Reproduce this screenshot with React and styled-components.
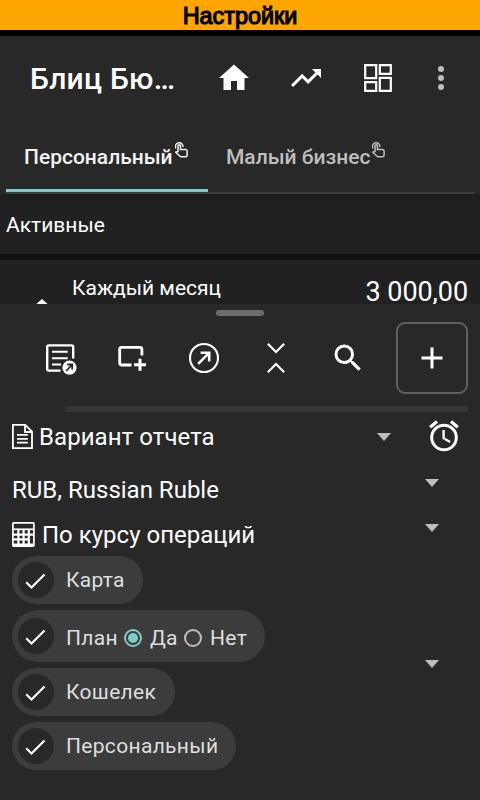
import React from "react";
import styled, { createGlobalStyle } from "styled-components";

const GlobalStyle = createGlobalStyle`
  * { box-sizing: border-box; }
  html, body { margin: 0; padding: 0; background: #282828; }
  body { font-family: Roboto, "Noto Sans", sans-serif; color: #fff; }
  svg { display: block; flex: none; }
`;

const Screen = styled.div`
  width: 480px;
  height: 800px;
  display: flex;
  flex-direction: column;
  overflow: hidden;
  background: #282828;
`;

const Banner = styled.div`
  flex: none;
  height: 36px;
  border-bottom: 6px solid #000;
  background: #ffa500;
  color: #000;
  text-align: center;
  font: 23.4px/32px "Liberation Sans", Arial, sans-serif;
  -webkit-text-stroke: 1.2px #000;
`;

const AppBar = styled.header`
  flex: none;
  height: 84px;
  padding: 0 21px 0 30px;
  display: flex;
  align-items: center;
`;

const Title = styled.h1`
  margin: 0;
  padding-top: 1px;
  width: 186px;
  font-size: 30px;
  line-height: 36px;
  font-weight: 500;
  letter-spacing: 0.28px;
  white-space: nowrap;
`;

const Actions = styled.div`
  display: flex;
  gap: 36px;
`;

const MoreButton = styled.div`
  margin-left: -9px;
  color: #bebebe;
`;

const Tabs = styled.nav`
  flex: none;
  height: 74px;
  margin: 0 6px;
  display: flex;
  border-bottom: 2px solid #3c3c3c;
`;

const Tab = styled.div`
  width: ${(p) => p.$width}px;
  height: 72px;
  padding: 21px 0 0 18px;
  display: flex;
  gap: 2px;
  border-bottom: 3px solid ${(p) => (p.$active ? "#80cbc4" : "transparent")};
  color: ${(p) => (p.$active ? "#f2f2f2" : "#bebebe")};
  font-size: 21px;
  line-height: 32px;
  font-weight: 500;
  white-space: nowrap;
`;

const SectionHeader = styled.div`
  flex: none;
  height: 66px;
  padding: 0 6px;
  border-bottom: 6px solid #111;
  background: linear-gradient(#1c1c1c, #212121 8px);
  font-size: 21px;
  line-height: 62px;
`;

const EntryRow = styled.div`
  flex: none;
  height: 44px;
  padding: 0 12px 0 33px;
  display: flex;
  overflow: hidden;
  background: #212121;
`;

const EntryIcon = styled.div`
  width: 39px;
  padding-top: 38px;
`;

const EntryTitle = styled.div`
  flex: 1;
  padding-top: 16px;
  font-size: 21px;
  line-height: 25px;
`;

const Amount = styled.div`
  padding-top: 18px;
  font-size: 27px;
  line-height: 28px;
  letter-spacing: -0.08px;
`;

const Sheet = styled.section`
  flex: 1;
  display: flex;
  flex-direction: column;
  padding: 6px 12px 0;
  background: #282828;
`;

const Handle = styled.div`
  flex: none;
  align-self: center;
  width: 48px;
  height: 6px;
  border-radius: 3px;
  background: #6d6d6d;
`;

const Toolbar = styled.div`
  flex: none;
  margin: 6px 0 12px 30px;
  height: 72px;
  display: flex;
  align-items: center;
  gap: 36px;
`;

const AddButton = styled.div`
  width: 72px;
  height: 72px;
  margin-left: -6px;
  display: flex;
  align-items: center;
  justify-content: center;
  border: 2px solid #606060;
  border-radius: 9px;
`;

const Track = styled.div`
  flex: none;
  height: 6px;
  margin-left: 53px;
  background: #363636;
`;

const Field = styled.div`
  flex: none;
  height: ${(p) => p.$height}px;
  padding: ${(p) => p.$top || 0}px ${(p) => p.$right || 0}px 0 0;
  display: flex;
  align-items: flex-start;
`;

const FieldLabel = styled.div`
  flex: 1;
  padding: ${(p) => p.$top || 0}px 0 0 ${(p) => p.$indent || 0}px;
  font-size: 24px;
  line-height: 30px;
  letter-spacing: ${(p) => p.$spacing || 0}px;
`;

const FieldIcon = styled.div`
  margin-top: ${(p) => p.$top || 0}px;
`;

const Caret = styled.div`
  width: 14px;
  height: 8px;
  margin: ${(p) => p.$top}px ${(p) => p.$right}px 0 0;
  background: #bebebe;
  clip-path: polygon(0 0, 100% 0, 50% 100%);
`;

const Filters = styled.div`
  display: flex;
  justify-content: space-between;
`;

const Chips = styled.div`
  display: flex;
  flex-direction: column;
  align-items: flex-start;
  gap: 6px;
`;

const Chip = styled.div`
  width: ${(p) => p.$width}px;
  height: ${(p) => p.$height || 48}px;
  padding-left: 6px;
  display: flex;
  align-items: center;
  border-radius: 26px;
  background: #3c3c3c;
  color: #dfdfdf;
  font-size: 21px;
  letter-spacing: 0.32px;
  white-space: nowrap;
`;

const CheckCircle = styled.span`
  width: 36px;
  height: 36px;
  margin-right: 12px;
  display: flex;
  align-items: center;
  justify-content: center;
  border-radius: 50%;
  background: #282828;
  color: #fff;
`;

const ChipText = styled.span`
  width: ${(p) => (p.$width ? `${p.$width}px` : "auto")};
  padding-top: ${(p) => p.$top || 0}px;
`;

const Radio = styled.span`
  width: 18px;
  height: 18px;
  margin: 4px 8px 0 0;
  display: flex;
  align-items: center;
  justify-content: center;
  border: 2px solid ${(p) => (p.$checked ? "#80cbc4" : "#bebebe")};
  border-radius: 50%;
  &::after {
    content: "";
    width: 10px;
    height: 10px;
    border-radius: 50%;
    background: ${(p) => (p.$checked ? "#80cbc4" : "transparent")};
  }
`;

const Icon = ({ children, size = 36 }) => (
  <svg width={size} height={size} viewBox="0 0 24 24" fill="currentColor">
    {children}
  </svg>
);

const DashboardIcon = () => (
  <svg width="36" height="36" viewBox="0 0 36 36" fill="none" stroke="currentColor" strokeWidth="2.2">
    <path d="M5.2 5.2h11v12.9h-11zM19.8 5.2h11v8.6h-11zM5.2 22.2h11v8.6h-11zM19.8 17.9h11v12.9h-11z" />
  </svg>
);

const TouchIcon = () => (
  <svg width="15" height="18" viewBox="0.6 -0.8 16 19" fill="none" stroke="currentColor" strokeWidth="1.6">
    <path d="M1.6 7A4 4 0 1 1 9 5.5" />
    <path d="M3.8 11.2V4.3a1.3 1.3 0 0 1 2.6 0v3.9h5.2q1.9 0 1.9 1.9v4q0 1.9-1.9 1.9H7.4q-1.1 0-1.8-.8L1.4 11q1-.9 2.1-.2" />
  </svg>
);

const ReportIcon = () => (
  <svg width="36" height="36" viewBox="0 -1 36 36" fill="none" stroke="currentColor">
    <path strokeWidth="2.4" d="M18.5 29.6H6.8q-1.6 0-1.6-1.6V6q0-1.6 1.6-1.6h22.8q1.6 0 1.6 1.6v11.5" />
    <path strokeWidth="2" d="M10 10.7h15.7M10 17.2h15.7M10 23.4h9" />
    <circle cx="27.5" cy="26.7" r="7.1" fill="currentColor" stroke="none" />
    <path stroke="#282828" strokeWidth="1.8" d="M24.2 30l5.6-6M25.2 23.5h5v5" />
  </svg>
);

const AddCardIcon = () => (
  <svg width="36" height="36" viewBox="-1 -0.8 36 36" fill="none" stroke="currentColor">
    <path strokeWidth="2.8" d="M16.5 24.2H6.7q-2 0-2-2V8.5q0-2 2-2h18.2q2 0 2 2v6.2" />
    <path strokeWidth="3" d="M19 24h12M25 18v12" />
  </svg>
);

const OpenIcon = () => (
  <svg width="36" height="36" viewBox="0 0 36 36" fill="none" stroke="currentColor">
    <circle cx="18" cy="18" r="14" strokeWidth="2.1" />
    <path strokeWidth="2.6" d="M12.2 23.8L22.8 13.2M14.6 12.8h8.6v8.6" />
  </svg>
);

const CollapseIcon = () => (
  <svg width="36" height="36" viewBox="0 0 36 36" fill="none" stroke="currentColor" strokeWidth="2.2">
    <path d="M9.8 3.8l8.2 8.2 8.2-8.2M9.8 32.2l8.2-8.2 8.2 8.2" />
  </svg>
);

const DocumentIcon = () => (
  <svg width="21" height="25" viewBox="0 0 21 25" fill="none" stroke="currentColor" strokeWidth="1.8">
    <path d="M.9.9h12.3l6.8 6.8v16.4H.9zM13 .9v7.1h7M5 10.8h10.8M5 14.8h10.8M5 18.7h10.8" />
  </svg>
);

const CalculatorIcon = () => (
  <svg width="23" height="25" viewBox="0 0 23 25" fill="none" stroke="currentColor" strokeWidth="1.7">
    <rect x=".9" y=".9" width="21" height="23.2" rx=".8" />
    <path d="M1 7.3h21" />
    <path strokeWidth="2.2" d="M1 12.6h21M1 17.4h16M1 22.7h21M6.4 8v16M11.6 8v16M16.8 8v16" />
  </svg>
);

const AlarmIcon = () => (
  <svg width="36" height="36" viewBox="0 0 36 36" fill="none" stroke="currentColor">
    <circle cx="18" cy="19.5" r="12.3" strokeWidth="3" />
    <path strokeWidth="3.2" d="M4.2 9.2l6.8-5.7M25 3.5l6.8 5.7" />
    <path strokeWidth="2.3" d="M17.6 12v8.2l6.5 3.9" />
  </svg>
);

const Check = () => (
  <CheckCircle>
    <svg width="24" height="24" viewBox="0 0 24 24" fill="none" stroke="currentColor" strokeWidth="2.1">
      <path d="M2.2 14.3l5.3 5.3L20.5 6.6" />
    </svg>
  </CheckCircle>
);

export default function App() {
  return (
    <>
      <GlobalStyle />
      <Screen>
        <Banner>Настройки</Banner>
        <AppBar>
          <Title>Блиц Бю…</Title>
          <Actions>
            <Icon><path d="M10 20v-6h4v6h5v-8h3L12 3 2 12h3v8z" /></Icon>
            <Icon><path d="M16 6l2.29 2.29-4.88 4.88-4-4L2 16.59 3.41 18l6-6 4 4 6.3-6.29L22 12V6z" /></Icon>
            <DashboardIcon />
            <MoreButton>
              <Icon>
                <circle cx="12" cy="6" r="2" /><circle cx="12" cy="12" r="2" /><circle cx="12" cy="18" r="2" />
              </Icon>
            </MoreButton>
          </Actions>
        </AppBar>
        <Tabs>
          <Tab $active $width={202}><span>Персональный</span><TouchIcon /></Tab>
          <Tab $width={200}><span>Малый бизнес</span><TouchIcon /></Tab>
        </Tabs>
        <SectionHeader>Активные</SectionHeader>
        <EntryRow>
          <EntryIcon>
            <svg width="18" height="8" viewBox="0 0 18 8" fill="currentColor"><path d="M9 1l9 8H0z" /></svg>
          </EntryIcon>
          <EntryTitle>Каждый месяц</EntryTitle>
          <Amount>3 000,00</Amount>
        </EntryRow>
        <Sheet>
          <Handle />
          <Toolbar>
            <ReportIcon />
            <AddCardIcon />
            <OpenIcon />
            <CollapseIcon />
            <Icon>
              <path d="M15.5 14h-.79l-.28-.27A6.471 6.471 0 0 0 16 9.5 6.5 6.5 0 1 0 9.5 16c1.61 0 3.09-.59 4.23-1.57l.27.28v.79l5 4.99L20.49 19l-4.99-5zm-6 0C7.01 14 5 11.99 5 9.5S7.01 5 9.5 5 14 7.01 14 9.5 11.99 14 9.5 14z" />
            </Icon>
            <AddButton>
              <Icon><path d="M19 13h-6v6h-2v-6H5v-2h6V5h2v6h6z" /></Icon>
            </AddButton>
          </Toolbar>
          <Track />
          <Field $height={56} $top={6} $right={6}>
            <FieldIcon $top={6}><DocumentIcon /></FieldIcon>
            <FieldLabel $top={4} $indent={6} $spacing={0.07}>Вариант отчета</FieldLabel>
            <Caret $top={15} $right={35} />
            <AlarmIcon />
          </Field>
          <Field $height={48} $top={7}>
            <FieldLabel>RUB, Russian Ruble</FieldLabel>
            <Caret $top={4} $right={29} />
          </Field>
          <Field $height={40} $top={4}>
            <FieldIcon $top={2}><CalculatorIcon /></FieldIcon>
            <FieldLabel $indent={7}>По курсу операций</FieldLabel>
            <Caret $top={4} $right={29} />
          </Field>
          <Filters>
            <Chips>
              <Chip $width={131}><Check /><ChipText>Карта</ChipText></Chip>
              <Chip $width={253} $height={52}>
                <Check />
                <ChipText $top={3} $width={58}>План</ChipText>
                <Radio $checked />
                <ChipText $top={3} $width={34}>Да</ChipText>
                <Radio />
                <ChipText $top={3}>Нет</ChipText>
              </Chip>
              <Chip $width={163}><Check /><ChipText>Кошелек</ChipText></Chip>
              <Chip $width={224}><Check /><ChipText>Персональный</ChipText></Chip>
            </Chips>
            <Caret $top={104} $right={29} />
          </Filters>
        </Sheet>
      </Screen>
    </>
  );
}
